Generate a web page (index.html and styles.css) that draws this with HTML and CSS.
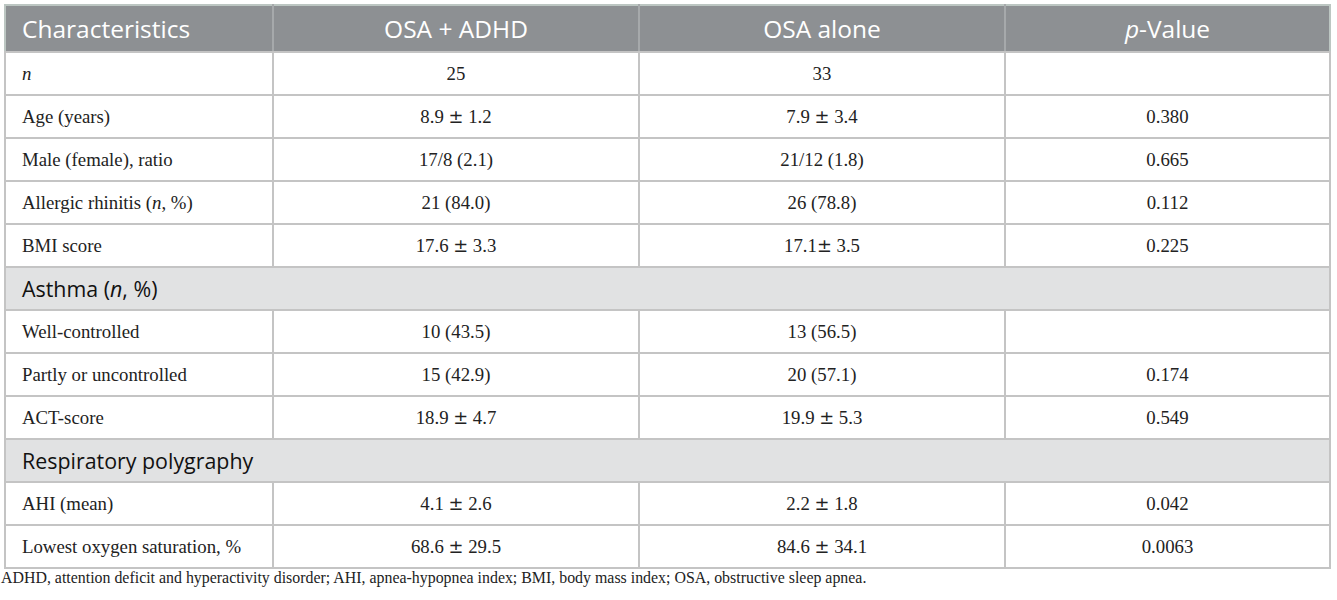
FILE: index.html
```html
<!DOCTYPE html>
<html lang="en">
<head>
    <meta charset="UTF-8">
    <meta name="viewport" content="width=device-width, initial-scale=1.0">
    <title>Table 1 - OSA and ADHD</title>
    <link rel="stylesheet" href="styles.css">
</head>
<body>

<table class="data-table">
    <colgroup>
        <col class="col-label">
        <col class="col-value">
        <col class="col-value">
        <col class="col-p">
    </colgroup>
    <thead>
        <tr>
            <th class="label">Characteristics</th>
            <th>OSA + ADHD</th>
            <th>OSA alone</th>
            <th><i>p</i>-Value</th>
        </tr>
    </thead>
    <tbody>
        <tr>
            <td class="label"><i>n</i></td>
            <td>25</td>
            <td>33</td>
            <td></td>
        </tr>
        <tr>
            <td class="label">Age (years)</td>
            <td>8.9 <span class="pm">±</span> 1.2</td>
            <td>7.9 <span class="pm">±</span> 3.4</td>
            <td>0.380</td>
        </tr>
        <tr>
            <td class="label">Male (female), ratio</td>
            <td>17/8 (2.1)</td>
            <td>21/12 (1.8)</td>
            <td>0.665</td>
        </tr>
        <tr>
            <td class="label">Allergic rhinitis (<i>n</i>, %)</td>
            <td>21 (84.0)</td>
            <td>26 (78.8)</td>
            <td>0.112</td>
        </tr>
        <tr>
            <td class="label">BMI score</td>
            <td>17.6 <span class="pm">±</span> 3.3</td>
            <td>17.1<span class="pm">±</span> 3.5</td>
            <td>0.225</td>
        </tr>
        <tr class="section">
            <td colspan="4">Asthma (<i>n</i>, %)</td>
        </tr>
        <tr>
            <td class="label">Well-controlled</td>
            <td>10 (43.5)</td>
            <td>13 (56.5)</td>
            <td></td>
        </tr>
        <tr>
            <td class="label">Partly or uncontrolled</td>
            <td>15 (42.9)</td>
            <td>20 (57.1)</td>
            <td>0.174</td>
        </tr>
        <tr>
            <td class="label">ACT-score</td>
            <td>18.9 <span class="pm">±</span> 4.7</td>
            <td>19.9 <span class="pm">±</span> 5.3</td>
            <td>0.549</td>
        </tr>
        <tr class="section">
            <td colspan="4">Respiratory polygraphy</td>
        </tr>
        <tr>
            <td class="label">AHI (mean)</td>
            <td>4.1 <span class="pm">±</span> 2.6</td>
            <td>2.2 <span class="pm">±</span> 1.8</td>
            <td>0.042</td>
        </tr>
        <tr>
            <td class="label">Lowest oxygen saturation, %</td>
            <td>68.6 <span class="pm">±</span> 29.5</td>
            <td>84.6 <span class="pm">±</span> 34.1</td>
            <td>0.0063</td>
        </tr>
    </tbody>
</table>

<p class="footnote">ADHD, attention deficit and hyperactivity disorder; AHI, apnea-hypopnea index; BMI, body mass index; OSA, obstructive sleep apnea.</p>

</body>
</html>
```

FILE: styles.css
```css
body {
    margin: 0;
    background-color: #fff;
    font-family: "Liberation Serif", "Times New Roman", serif;
    color: #222;
}
.data-table {
    width: 1327px;
    margin: 4px 0 0 4px;
    border-collapse: collapse;
    border: 2px solid #bcc6c2;
    table-layout: fixed;
}
.col-label {
    width: 268px;
}
.col-value {
    width: 366px;
}
.col-p {
    width: 325px;
}
th {
    height: 45px;
    padding: 0 16px;
    background-color: #8d9093;
    color: #fff;
    font-family: "Open Sans", sans-serif;
    font-size: 24.5px;
    font-weight: 400;
    text-align: center;
    border-left: 2px solid #a6a9ab;
    border-bottom: 2px solid #c4c4c4;
}
th:first-child {
    border-left: none;
}
td {
    height: 41px;
    padding: 0 16px;
    font-size: 18.8px;
    text-align: center;
    border: 2px solid #c4c4c4;
}
.pm {
    font-family: "DejaVu Serif", serif;
    font-size: 0.95em;
}
.label {
    text-align: left;
}
.section td {
    text-align: left;
    background-color: #e1e2e3;
    font-family: "Open Sans", sans-serif;
    font-size: 21.4px;
    color: #111;
}
.footnote {
    margin: 0 0 0 1px;
    font-size: 15.9px;
    line-height: 18px;
}
```
